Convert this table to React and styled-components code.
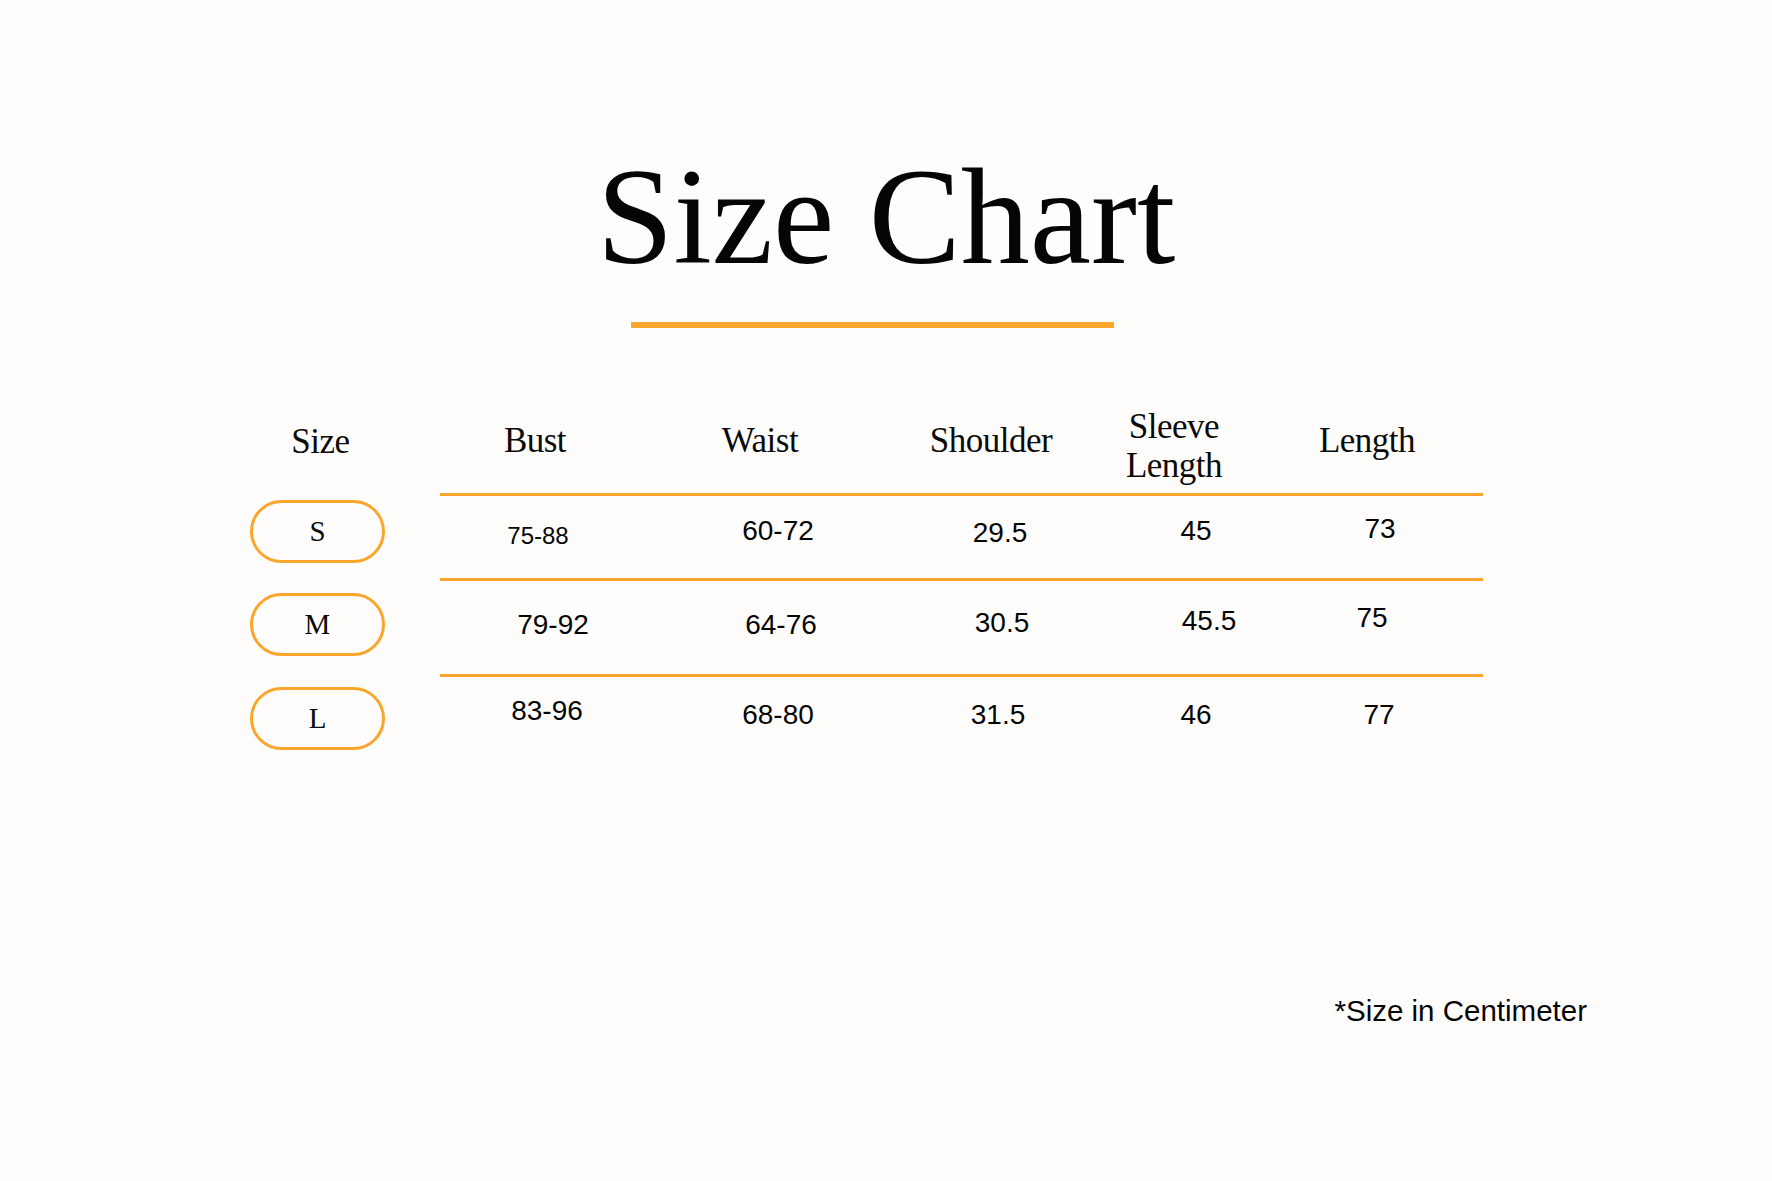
import React from 'react';
import styled, { createGlobalStyle } from 'styled-components';

const ORANGE = '#f9a62b';

const GlobalStyle = createGlobalStyle`
  html, body {
    margin: 0;
    padding: 0;
    background: #fefdfc;
  }
`;

// header labels with small nudges to match the printed chart
const columns = [
  { label: 'Bust', shift: -10, dy: -6 },
  { label: 'Waist', shift: -19, dy: -6 },
  { label: 'Shoulder', shift: -9, dy: -6 },
  { label: 'Sleeve\nLength', shift: -26, dy: -1 },
  { label: 'Length', shift: -10, dy: -6 },
];

const rows = [
  {
    size: 'S',
    height: 85,
    pillShift: -6,
    values: [
      { v: '75-88', dx: -7, dy: -1, small: true },
      { v: '60-72', dx: -1, dy: -6 },
      { v: '29.5', dx: 0, dy: -4 },
      { v: '45', dx: -4, dy: -6 },
      { v: '73', dx: 3, dy: -8 },
    ],
  },
  {
    size: 'M',
    height: 96,
    pillShift: -3,
    values: [
      { v: '79-92', dx: 8, dy: -3 },
      { v: '64-76', dx: 2, dy: -3 },
      { v: '30.5', dx: 2, dy: -5 },
      { v: '45.5', dx: 9, dy: -7 },
      { v: '75', dx: -5, dy: -10 },
    ],
  },
  {
    size: 'L',
    height: 88,
    pillShift: -1,
    values: [
      { v: '83-96', dx: 2, dy: -9 },
      { v: '68-80', dx: -1, dy: -5 },
      { v: '31.5', dx: -2, dy: -5 },
      { v: '46', dx: -4, dy: -5 },
      { v: '77', dx: 2, dy: -5 },
    ],
  },
];

export default function App() {
  return (
    <Page>
      <GlobalStyle />
      <Title>Size Chart</Title>
      <Rule />

      <Table>
        <Row $h={93}>
          <SizeHead>Size</SizeHead>
          <HeadGrid>
            {columns.map(col => (
              <HeadCell key={col.label} $shift={col.shift} $dy={col.dy}>{col.label}</HeadCell>
            ))}
          </HeadGrid>
        </Row>

        {rows.map(row => (
          <Row key={row.size} $h={row.height}>
            <PillCell>
              <Pill $shift={row.pillShift}>{row.size}</Pill>
            </PillCell>
            <DataGrid>
              {row.values.map((cell, i) => (
                <Value key={i} $dx={cell.dx} $dy={cell.dy} $small={cell.small}>
                  {cell.v}
                </Value>
              ))}
            </DataGrid>
          </Row>
        ))}
      </Table>

      <Footer>
        <Note>*Size in Centimeter</Note>
      </Footer>
    </Page>
  );
}

const Page = styled.div`
  width: 1772px;
  height: 1181px;
  display: flex;
  flex-direction: column;
  background: #fefdfc;
  color: #050505;
  overflow: hidden;
`;

const Title = styled.h1`
  margin: 148px 0 0;
  font-family: "Liberation Serif", "Times New Roman", serif;
  font-weight: 400;
  font-size: 138px;
  line-height: 1;
  letter-spacing: 0;
  text-align: center;
`;

const Rule = styled.div`
  width: 483px;
  height: 6px;
  margin: 36px 0 0 631px;
  background: ${ORANGE};
`;

const Table = styled.div`
  margin: 72px 0 0 250px;
  display: flex;
  flex-direction: column;
`;

const Row = styled.div`
  display: grid;
  grid-template-columns: 135px 1043px;
  column-gap: 55px;
  height: ${p => p.$h}px;
`;

const cols = `210px 258px 184px 216px 138px 1fr`;

const HeadGrid = styled.div`
  display: grid;
  grid-template-columns: ${cols};
  align-items: center;
`;

const headFont = `
  font-family: "Liberation Serif", "Times New Roman", serif;
  font-size: 35px;
  line-height: 39px;
  letter-spacing: -0.5px;
  color: #0a0a0a;
`;

const SizeHead = styled.div`
  ${headFont}
  display: flex;
  align-items: center;
  justify-content: center;
  padding-left: 6px;
  margin-top: -11px;
`;

const HeadCell = styled.div`
  ${headFont}
  white-space: pre-line;
  text-align: center;
  transform: translate(${p => p.$shift}px, ${p => p.$dy}px);
`;

const PillCell = styled.div`
  display: flex;
  align-items: center;
  justify-content: center;
  padding-top: 3px;
`;

const Pill = styled.div`
  width: 136px;
  height: 63px;
  box-sizing: border-box;
  border: 3px solid ${ORANGE};
  border-radius: 32px;
  display: flex;
  align-items: center;
  justify-content: center;
  font-family: "Liberation Serif", "Times New Roman", serif;
  font-size: 29px;
  color: #0a0a0a;
  transform: translateY(${p => p.$shift}px);
`;

const DataGrid = styled.div`
  display: grid;
  grid-template-columns: ${cols};
  align-items: center;
  border-top: 3px solid ${ORANGE};
`;

const Value = styled.div`
  font-family: "Liberation Sans", Arial, sans-serif;
  font-size: ${p => (p.$small ? 24 : 28)}px;
  text-align: center;
  color: #050505;
  transform: translate(${p => p.$dx}px, ${p => p.$dy}px);
`;

const Footer = styled.div`
  margin-top: 232px;
  display: flex;
  justify-content: flex-end;
  padding-right: 185px;
`;

const Note = styled.div`
  font-family: "Liberation Sans", Arial, sans-serif;
  font-size: 29.5px;
  color: #050505;
`;
